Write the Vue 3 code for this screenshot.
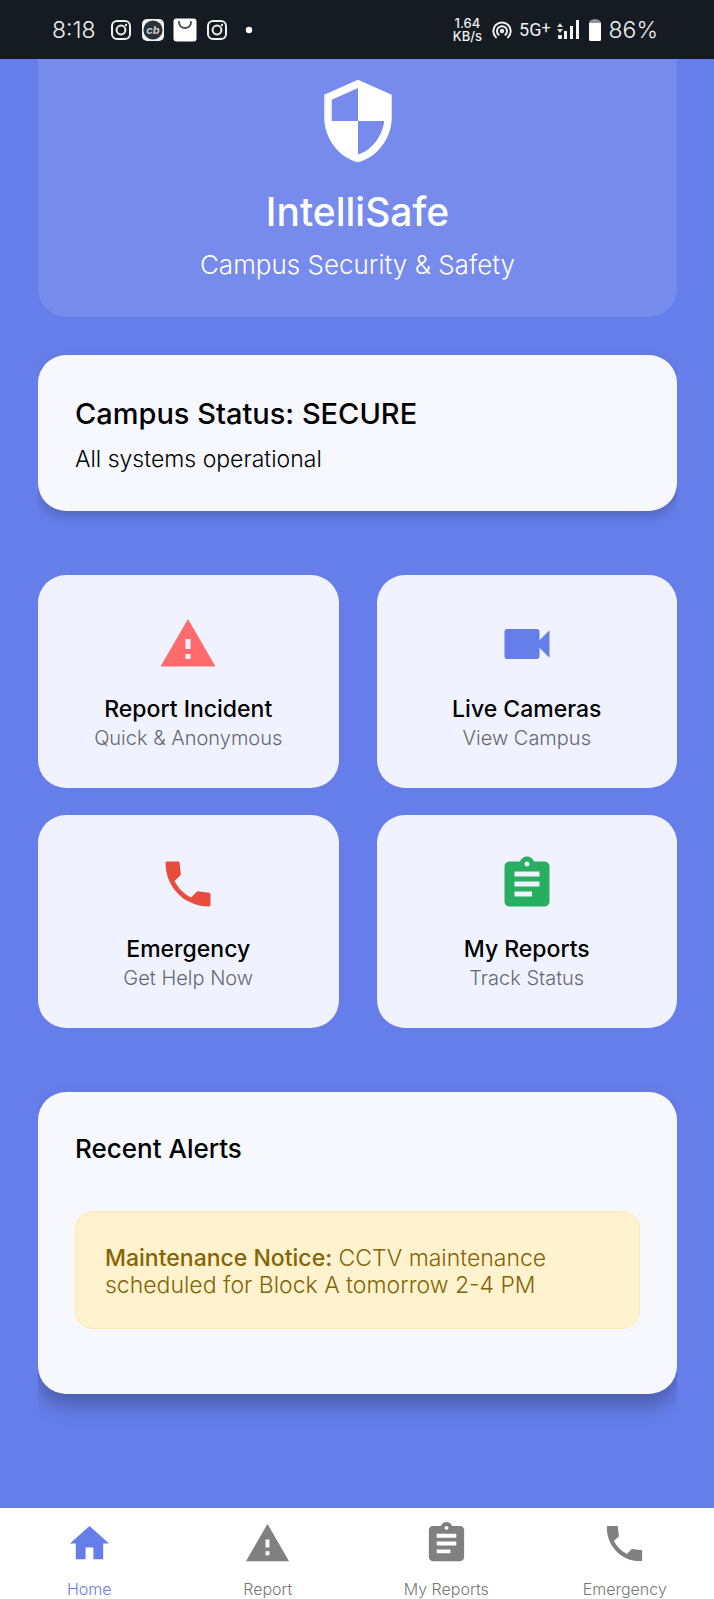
<script setup>
const icons = {
  shield:
    'M12 1L3 5v6c0 5.55 3.84 10.74 9 12 5.16-1.26 9-6.45 9-12V5l-9-4zm0 10.99h7c-.53 4.12-3.28 7.79-7 8.94V12H5V6.3l7-3.11v8.8z',
  warning: 'M1 21h22L12 2 1 21zm12-3h-2v-2h2v2zm0-4h-2v-4h2v4z',
  camera:
    'M17 10.5V7c0-.55-.45-1-1-1H4c-.55 0-1 .45-1 1v10c0 .55.45 1 1 1h12c.55 0 1-.45 1-1v-3.5l4 4v-11l-4 4z',
  phone:
    'M8.04 3H3.6c-.35 0-.6.25-.6.6C3 13.3 10.7 21 20.4 21c.35 0 .6-.25.6-.6v-4.3c0-.35-.2-.6-.55-.64l-4.72-.61-2.52 2.52c-2.83-1.44-5.15-3.75-6.59-6.59l2.53-2.53-.5-4.65C8.6 3.2 8.4 3 8.04 3z',
  phoneSharp:
    'M21 15.46l-5.27-.61-2.52 2.52c-2.83-1.44-5.15-3.75-6.59-6.59l2.53-2.53L8.54 3H3.03C2.45 13.18 10.82 21.55 21 20.97v-5.51z',
  clipboard:
    'M19 3h-4.18C14.4 1.84 13.3 1 12 1c-1.3 0-2.4.84-2.82 2H5c-1.1 0-2 .9-2 2v14c0 1.1.9 2 2 2h14c1.1 0 2-.9 2-2V5c0-1.1-.9-2-2-2zm-7 0c.55 0 1 .45 1 1s-.45 1-1 1-1-.45-1-1 .45-1 1-1zm2 14H7v-2h7v2zm3-4H7v-2h10v2zm0-4H7V7h10v2z',
  home: 'M10 20v-6h4v6h5v-8h3L12 3 2 12h3v8z',
}

const actions = [
  { title: 'Report Incident', note: 'Quick & Anonymous', icon: 'warning', tone: 'coral' },
  { title: 'Live Cameras', note: 'View Campus', icon: 'camera', tone: 'indigo' },
  { title: 'Emergency', note: 'Get Help Now', icon: 'phone', tone: 'red' },
  { title: 'My Reports', note: 'Track Status', icon: 'clipboard', tone: 'green' },
]

const tabs = [
  { label: 'Home', icon: 'home', href: '#home', active: true },
  { label: 'Report', icon: 'warning', href: '#report' },
  { label: 'My Reports', icon: 'clipboard', href: '#my-reports' },
  { label: 'Emergency', icon: 'phoneSharp', href: '#emergency' },
]
</script>

<template>
  <div class="app">
    <div class="statusbar">
      <div class="status-left">
        <span class="clock">8:18</span>
        <svg class="glyph" viewBox="0 0 24 24" fill="none" stroke="#eef0f2" stroke-width="2">
          <rect x="3" y="3" width="18" height="18" rx="5" />
          <circle cx="12" cy="12" r="4.4" />
          <circle cx="17" cy="7" r="1.2" fill="#eef0f2" stroke="none" />
        </svg>
        <svg class="glyph" viewBox="0 0 24 24">
          <rect x="1" y="1" width="22" height="22" rx="5" fill="#eef0f2" />
          <circle cx="12" cy="12" r="9.6" fill="#2b3036" />
          <text x="12" y="15.5" class="cb" text-anchor="middle">cb</text>
        </svg>
        <svg class="glyph" viewBox="0 0 24 24">
          <rect x="0.5" y="0.5" width="23" height="23" rx="3" fill="#fff" />
          <path d="M6 4c0 8 12 8 12 0" fill="none" stroke="#4a4e54" stroke-width="2" stroke-linecap="round" />
        </svg>
        <svg class="glyph" viewBox="0 0 24 24" fill="none" stroke="#eef0f2" stroke-width="2">
          <rect x="3" y="3" width="18" height="18" rx="5" />
          <circle cx="12" cy="12" r="4.4" />
          <circle cx="17" cy="7" r="1.2" fill="#eef0f2" stroke="none" />
        </svg>
        <svg class="glyph" viewBox="0 0 24 24"><circle cx="12" cy="12" r="3.2" fill="#fff" /></svg>
      </div>
      <div class="status-right">
        <span class="speed"><span>1.64</span><span>KB/s</span></span>
        <svg class="glyph" viewBox="0 0 24 24" fill="none" stroke="#eef0f2" stroke-width="2" stroke-linecap="round">
          <circle cx="12" cy="13" r="2.2" fill="#eef0f2" stroke="none" />
          <path d="M8.6 16.8a5 5 0 1 1 6.8 0" />
          <path d="M6 19.4a8.7 8.7 0 1 1 12 0" />
        </svg>
        <span class="network">5G<sup>+</sup></span>
        <svg class="glyph" viewBox="0 0 24 24">
          <path d="M1 9l3-4 3 4zM1 11h6l-3 4z" fill="#d5d8db" />
          <g fill="#f4f5f6">
            <rect x="2" y="17" width="4" height="4" rx="1" />
            <rect x="8" y="13" width="3" height="8" />
            <rect x="14" y="8" width="3" height="13" />
            <rect x="20" y="2" width="3" height="19" />
          </g>
        </svg>
        <svg class="battery" viewBox="0 0 12 24">
          <path d="M0 5c0-2 2-3 3.500-3.500C5 .8 7 .8 8.500 1.500 10 2 12 3 12 5z" fill="#8f9296" />
          <path d="M0 5h12v16.500a1.500 1.500 0 0 1-1.500 1.500h-9a1.500 1.500 0 0 1-1.500-1.500z" fill="#fff" />
        </svg>
        <span class="percent">86%</span>
      </div>
    </div>

    <main class="content">
      <header class="hero">
        <svg class="hero-icon" viewBox="0 0 24 24" aria-hidden="true"><path :d="icons.shield" /></svg>
        <h1>IntelliSafe</h1>
        <p>Campus Security &amp; Safety</p>
      </header>

      <section class="card status-card">
        <h2>Campus Status: SECURE</h2>
        <p>All systems operational</p>
      </section>

      <section class="actions">
        <button v-for="a in actions" :key="a.title" type="button" class="action">
          <svg class="action-icon" :class="a.tone" viewBox="0 0 24 24" aria-hidden="true">
            <path :d="icons[a.icon]" />
          </svg>
          <span class="action-title">{{ a.title }}</span>
          <span class="action-note">{{ a.note }}</span>
        </button>
      </section>

      <section class="card alerts">
        <h3>Recent Alerts</h3>
        <p class="notice"><strong>Maintenance Notice:</strong> CCTV maintenance scheduled for Block A tomorrow 2-4 PM</p>
      </section>
    </main>

    <nav class="tabs">
      <a v-for="t in tabs" :key="t.label" :href="t.href" class="tab" :class="{ active: t.active }">
        <svg class="tab-icon" viewBox="0 0 24 24" aria-hidden="true"><path :d="icons[t.icon]" /></svg>
        <span>{{ t.label }}</span>
      </a>
    </nav>
  </div>
</template>

<style>
body {
  margin: 0;
  background: #667eea;
}
</style>

<style scoped>
.app {
  display: flex;
  flex-direction: column;
  min-height: 100vh;
  background: #667eea;
  font-family: Inter, Roboto, "Liberation Sans", sans-serif;
  font-weight: 330;
  color: #000;
}

h1,
h2,
h3,
p {
  margin: 0;
}

.statusbar {
  display: flex;
  justify-content: space-between;
  align-items: center;
  height: 59px;
  padding: 0 56px 0 52px;
  background: #161b22;
  color: #eef0f2;
}

.status-left,
.status-right {
  display: flex;
  align-items: center;
  gap: 8px;
}

.status-right {
  gap: 5px;
}

.clock,
.percent {
  font-size: 23px;
  line-height: 28px;
}

.clock {
  margin-right: 5px;
}

.glyph {
  width: 24px;
  height: 24px;
}

.cb {
  font-size: 11px;
  font-weight: 700;
  font-style: italic;
  fill: #c9ccd0;
}

.speed {
  display: flex;
  flex-direction: column;
  align-items: center;
  margin-right: 3px;
  font-size: 13px;
  font-weight: 500;
  line-height: 13px;
}

.network {
  font-family: Roboto, Inter, sans-serif;
  font-size: 18px;
  font-weight: 400;
  line-height: 24px;
}

.network sup {
  font-size: 16px;
  line-height: 0;
  vertical-align: 3px;
}

.battery {
  width: 12px;
  height: 24px;
  margin: 0 3px 0 4px;
}

.content {
  flex: 1;
  padding: 0 37px 112px 38px;
}

.hero {
  display: flex;
  flex-direction: column;
  align-items: center;
  padding: 17px 38px 36px;
  border-radius: 0 0 28px 28px;
  background: #768bec;
  color: #fff;
  text-align: center;
}

.hero-icon {
  width: 90px;
  height: 90px;
  fill: #fff;
}

.hero h1 {
  margin-top: 20px;
  font-size: 39px;
  font-weight: 500;
  line-height: 52px;
}

.hero p {
  margin-top: 11px;
  font-size: 26px;
  line-height: 32px;
}

.card {
  border-radius: 28px;
  background: #f6f8fe;
  clip-path: inset(-12px 0 -40px 0);
}

.status-card {
  margin-top: 38px;
  padding: 39px 37px 37px;
  box-shadow: 0 5px 12px rgba(0, 0, 0, 0.2);
}

.status-card h2 {
  font-size: 29px;
  font-weight: 450;
  line-height: 40px;
}

.status-card p {
  margin-top: 10px;
  font-size: 23px;
  line-height: 30px;
}

.actions {
  display: grid;
  grid-template-columns: 1fr 1fr;
  gap: 27px 38px;
  margin-top: 64px;
}

.action {
  display: flex;
  flex-direction: column;
  align-items: center;
  padding: 39px 20px 36px;
  border: 0;
  border-radius: 28px;
  background: #f0f3ff;
  font-family: inherit;
  font-weight: inherit;
  color: #000;
}

.action-icon {
  width: 60px;
  height: 60px;
}

.coral {
  fill: #ff6b6b;
}

.indigo {
  fill: #667eea;
}

.red {
  fill: #e74c3c;
}

.green {
  fill: #27ae60;
}

.action-title {
  margin-top: 20px;
  font-size: 23px;
  font-weight: 450;
  line-height: 30px;
}

.action-note {
  font-size: 20px;
  line-height: 28px;
  color: #66686d;
}

.alerts {
  margin-top: 64px;
  padding: 39px 37px 65px;
  box-shadow: 0 12px 20px rgba(0, 0, 0, 0.26);
}

.alerts h3 {
  font-size: 26px;
  font-weight: 450;
  line-height: 36px;
}

.notice {
  margin-top: 44px;
  padding: 33px 29px 29px;
  border: 1px solid #fdeab0;
  border-radius: 18px;
  background: #fff2ce;
  font-size: 23px;
  line-height: 27px;
  color: #856404;
}

.notice strong {
  font-weight: 450;
}

.tabs {
  display: grid;
  grid-template-columns: repeat(4, 1fr);
  padding-top: 12px;
  background: #fff;
}

.tab {
  display: flex;
  flex-direction: column;
  align-items: center;
  gap: 12px;
  font-size: 16px;
  line-height: 20px;
  text-decoration: none;
  color: #777;
}

.tab-icon {
  width: 47px;
  height: 47px;
  fill: #808080;
}

.tab.active {
  color: #667eea;
}

.tab.active .tab-icon {
  fill: #667eea;
}
</style>
